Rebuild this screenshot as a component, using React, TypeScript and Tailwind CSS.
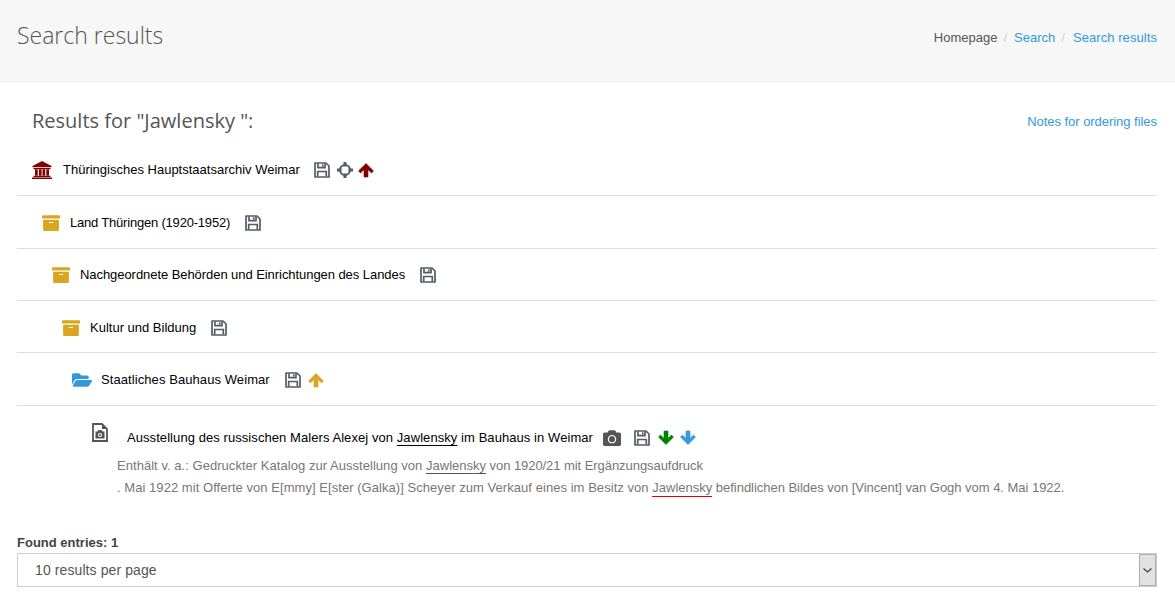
import { FaArchive, FaCamera, FaFolderOpen } from "react-icons/fa";

function SaveIcon() {
    return (
        <svg viewBox="0 0 16 16" className="w-4 h-4 shrink-0" fill="none" stroke="#555c66" strokeWidth="1.7">
            <path d="M1 1h11l3 3v11H1z" strokeLinejoin="round" />
            <path d="M4 1.500v4.200h7V1.500" />
            <path d="M8.700 2.400v2.200" />
            <path d="M3.700 14.500V9.500h8.600v5" />
        </svg>
    )
}

function CrosshairIcon() {
    return (
        <svg viewBox="0 0 16 16" className="w-4 h-4 shrink-0 ml-[7px]" fill="none" stroke="#555c66">
            <circle cx="8" cy="8" r="5" strokeWidth="2.100" />
            <path d="M8 0v4.500M8 11.500V16M0 8h4.500M11.500 8H16" strokeWidth="3" />
        </svg>
    )
}

function ArrowIcon({ className }: { className: string }) {
    return (
        <svg viewBox="0 0 16 16" className={`w-4 h-4 shrink-0 ${className}`} fill="currentColor">
            <path d="M8 1.500l7.500 7.400-2 2L10 7.600V15H6V7.600l-3.500 3.300-2-2z" stroke="currentColor" strokeWidth=".6" strokeLinejoin="round" />
        </svg>
    )
}

function BankIcon() {
    return (
        <svg viewBox="0 0 20 18" className="w-5 h-[18px] shrink-0" fill="#800000">
            <path d="M10 0l9.500 5v1.300H.5V5z" />
            <path d="M1.500 7h17v1.200h-17zM3 8.500h2.700v6H3zM6.900 8.500h2.700v6H6.900zM10.500 8.500h2.700v6h-2.700zM14.300 8.500h2.700v6h-2.700zM1.500 14.800h17V16h-17zM0 16.400h20V18H0z" />
        </svg>
    )
}

function FileCameraIcon() {
    return (
        <svg viewBox="0 0 16 19" className="w-4 h-[19px] shrink-0" fill="none">
            <path d="M1 1h9l5 5v12H1z" stroke="#555" strokeWidth="1.800" />
            <path d="M10 1v5h5z" fill="#555" />
            <path d="M3.500 8.500h2l1-1.500h3l1 1.500h2v7h-9z" fill="#555" />
            <circle cx="8" cy="12" r="2" fill="#fff" />
            <circle cx="8" cy="12" r="1" fill="#555" />
        </svg>
    )
}

function Row({ box, track, icon, label, children }: { box: string; track: string; icon: React.ReactNode; label: string; children: React.ReactNode }) {
    return (
        <div className={`flex items-center border-b border-[#ddd] ${box}`}>
            {icon}
            <span className={`text-[13px] text-black ml-[10px] mr-[15px] ${track}`}>{label}</span>
            {children}
        </div>
    )
}

const archive = <FaArchive className="text-[18px] text-[#daa520] shrink-0" />

function App() {
    return (
        <div className="h-[602px] overflow-hidden bg-white font-['Liberation_Sans',Arial,sans-serif]">
            <header className="flex items-center justify-between h-[82px] pl-[17px] pr-[18px] pb-[11px] bg-[#f7f7f7] border-b border-[#eee]">
                <h1 className="font-['Open_Sans',sans-serif] font-light text-[23px] text-[#555]">Search results</h1>
                <nav className="flex items-center text-[13px] pt-[5px]">
                    <span className="text-[#555]">Homepage</span>
                    <span className="text-[#ccc] ml-[6px] mr-[7px]">/</span>
                    <a className="text-[#3498db]">Search</a>
                    <span className="text-[#ccc] ml-[6px] mr-[8px]">/</span>
                    <a className="text-[#3498db] tracking-[0.07px]">Search results</a>
                </nav>
            </header>

            <main className="pl-[17px] pr-[18px]">
                <div className="flex items-center justify-between h-[62px] pl-[15px] pt-[16px]">
                    <h2 className="font-['Open_Sans',sans-serif] text-[20px] text-[#555]">Results for "Jawlensky ":</h2>
                    <a className="text-[13px] text-[#3498db] tracking-[-0.04px] pt-[2px]">Notes for ordering files</a>
                </div>

                <div className="flex items-center h-[52px] border-b border-[#ddd] pl-[15px]">
                    <BankIcon />
                    <span className="text-[13px] text-black ml-[11px] mr-[14px]">Thüringisches Hauptstaatsarchiv Weimar</span>
                    <SaveIcon />
                    <CrosshairIcon />
                    <ArrowIcon className="text-[#800000] ml-[5px]" />
                </div>
                <Row box="h-[53px] pt-[2px] pl-[25px]" track="tracking-[-0.2px]" icon={archive} label="Land Thüringen (1920-1952)">
                    <SaveIcon />
                </Row>
                <Row box="h-[52px] pl-[35px]" track="tracking-[-0.06px]" icon={archive} label="Nachgeordnete Behörden und Einrichtungen des Landes">
                    <SaveIcon />
                </Row>
                <Row box="h-[52px] pt-[2px] pl-[45px]" track="" icon={archive} label="Kultur und Bildung">
                    <SaveIcon />
                </Row>
                <Row box="h-[53px] pt-[2px] pl-[55px]" track="tracking-[0.08px]" icon={<FaFolderOpen className="text-[20px] text-[#3498db] shrink-0 -mr-[1px]" />} label="Staatliches Bauhaus Weimar">
                    <SaveIcon />
                    <ArrowIcon className="text-[#daa520] ml-[7px]" />
                </Row>

                <div className="pt-[17px] pl-[75px]">
                    <div className="flex items-start h-[32px]">
                        <FileCameraIcon />
                        <div className="flex items-center ml-[19px] mt-[5px]">
                            <span className="text-[13px] text-black mr-[10px] tracking-[0.07px]">Ausstellung des russischen Malers Alexej von <span className="underline decoration-black underline-offset-[3px]">Jawlensky</span> im Bauhaus in Weimar</span>
                            <FaCamera className="text-[18px] text-[#555] mr-[13px]" />
                            <SaveIcon />
                            <ArrowIcon className="text-[#008000] ml-[8px] rotate-180" />
                            <ArrowIcon className="text-[#3498db] ml-[6px] rotate-180" />
                        </div>
                    </div>
                    <div className="pl-[25px] text-[13px] leading-[22px] text-[#777]">
                        <p><span className="tracking-[0.04px]">Enthält v. a.: Gedruckter Katalog zur Ausstellung von </span><span className="underline decoration-[#555] underline-offset-[3px]">Jawlensky</span><span className="tracking-[-0.06px]"> von 1920/21 mit Ergänzungsaufdruck</span></p>
                        <p><span className="tracking-[0.05px]">. Mai 1922 mit Offerte von E[mmy] E[ster (Galka)] Scheyer zum Verkauf eines im Besitz von </span><span className="relative">Jawlensky<span className="absolute left-0 right-0 top-[16px] h-px bg-[#e60000]"></span></span><span className="tracking-[-0.03px]"> befindlichen Bildes von [Vincent] van Gogh vom 4. Mai 1922.</span></p>
                    </div>
                </div>

                <p className="mt-[35px] text-[13px] leading-[18px] font-bold text-[#444]">Found entries: 1</p>
                <div className="flex items-stretch h-[34px] mt-[1px] border border-[#ccc]">
                    <div className="flex-1 flex items-center pl-[17px] pt-[1px] text-[14px] text-[#555] tracking-[0.1px]">10 results per page</div>
                    <div className="flex items-center justify-center w-[17px] bg-[#e1e1e1] border border-[#adadad]">
                        <svg viewBox="0 0 9 5" className="w-[9px] h-[5px]" fill="none"><path d="M.5.5l4 3.500 4-3.500" stroke="#444" strokeWidth="1.3" /></svg>
                    </div>
                </div>
            </main>
        </div>
    )
}

export default App
